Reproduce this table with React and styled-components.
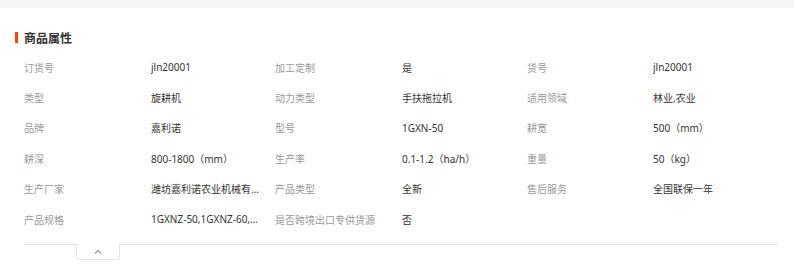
import React from "react";
import styled, { createGlobalStyle } from "styled-components";

const Global = createGlobalStyle`
  html, body { margin: 0; padding: 0; background: #fff; }
  body { font-family: "Noto Sans", "Noto Sans CJK SC", sans-serif; }
`;

const TopBand = styled.div`
  height: 8px;
  background: #f5f5f5;
`;

const Section = styled.section`
  background: #fff;
  padding: 19px 16px 0 0;
`;

const Title = styled.h2`
  margin: 0;
  display: flex;
  align-items: center;
  gap: 6px;
  padding-left: 15px;
  height: 20px;
  font-family: "Noto Sans CJK SC", sans-serif;
  font-size: 12px;
  font-weight: 700;
  color: #333;
  &::before {
    content: "";
    width: 3px;
    height: 11px;
    background: #ff4400;
  }
`;

const Grid = styled.div`
  margin-top: 5px;
  padding-left: 24px;
  display: grid;
  grid-template-columns: 127px 124px 127px 125px 126px 1fr;
  grid-auto-rows: 30.4px;
  align-items: center;
  font-size: 10px;
`;

const Label = styled.div`
  color: #999;
  white-space: nowrap;
  font-family: "Noto Sans CJK SC", sans-serif;
`;

const Value = styled.div`
  color: #333;
  white-space: nowrap;
  overflow: hidden;
  text-overflow: ellipsis;
  max-width: ${(p) => (p.$narrow ? "108px" : "none")};
  font-family: "Noto Sans", "Noto Sans CJK SC", sans-serif;
`;

const Footer = styled.div`
  margin: 10px 0 0 24px;
  border-top: 1px solid #e5e5e5;
`;

const Toggle = styled.button`
  display: flex;
  align-items: center;
  justify-content: center;
  margin: -1px 0 0 52px;
  width: 44px;
  height: 16px;
  padding: 0;
  border: 1px solid #e5e5e5;
  border-top: none;
  border-radius: 0 0 4px 4px;
  background: #fff;
  cursor: pointer;
`;

const rows = [
  ["订货号", "jln20001", "加工定制", "是", "货号", "jln20001"],
  ["类型", "旋耕机", "动力类型", "手扶拖拉机", "适用领域", "林业,农业"],
  ["品牌", "嘉利诺", "型号", "1GXN-50", "耕宽", "500（mm）"],
  ["耕深", "800-1800（mm）", "生产率", "0.1-1.2（ha/h）", "重量", "50（kg）"],
  ["生产厂家", "潍坊嘉利诺农业机械有限公司", "产品类型", "全新", "售后服务", "全国联保一年"],
  ["产品规格", "1GXNZ-50,1GXNZ-60,1GXNZ-70", "是否跨境出口专供货源", "否"],
];

export default function App() {
  return (
    <>
      <Global />
      <TopBand />
      <Section>
        <Title>商品属性</Title>
        <Grid>
          {rows.map((r, i) =>
            r.map((t, j) =>
              j % 2 === 0 ? (
                <Label key={`${i}-${j}`}>{t}</Label>
              ) : (
                <Value key={`${i}-${j}`} $narrow={j === 1}>
                  {t}
                </Value>
              )
            )
          )}
        </Grid>
        <Footer>
          <Toggle aria-label="收起">
            <svg width="8" height="5" viewBox="0 0 8 5">
              <path d="M1 4.5 L4 1.5 L7 4.5" fill="none" stroke="#8a96a8" strokeWidth="1.1" />
            </svg>
          </Toggle>
        </Footer>
      </Section>
    </>
  );
}
